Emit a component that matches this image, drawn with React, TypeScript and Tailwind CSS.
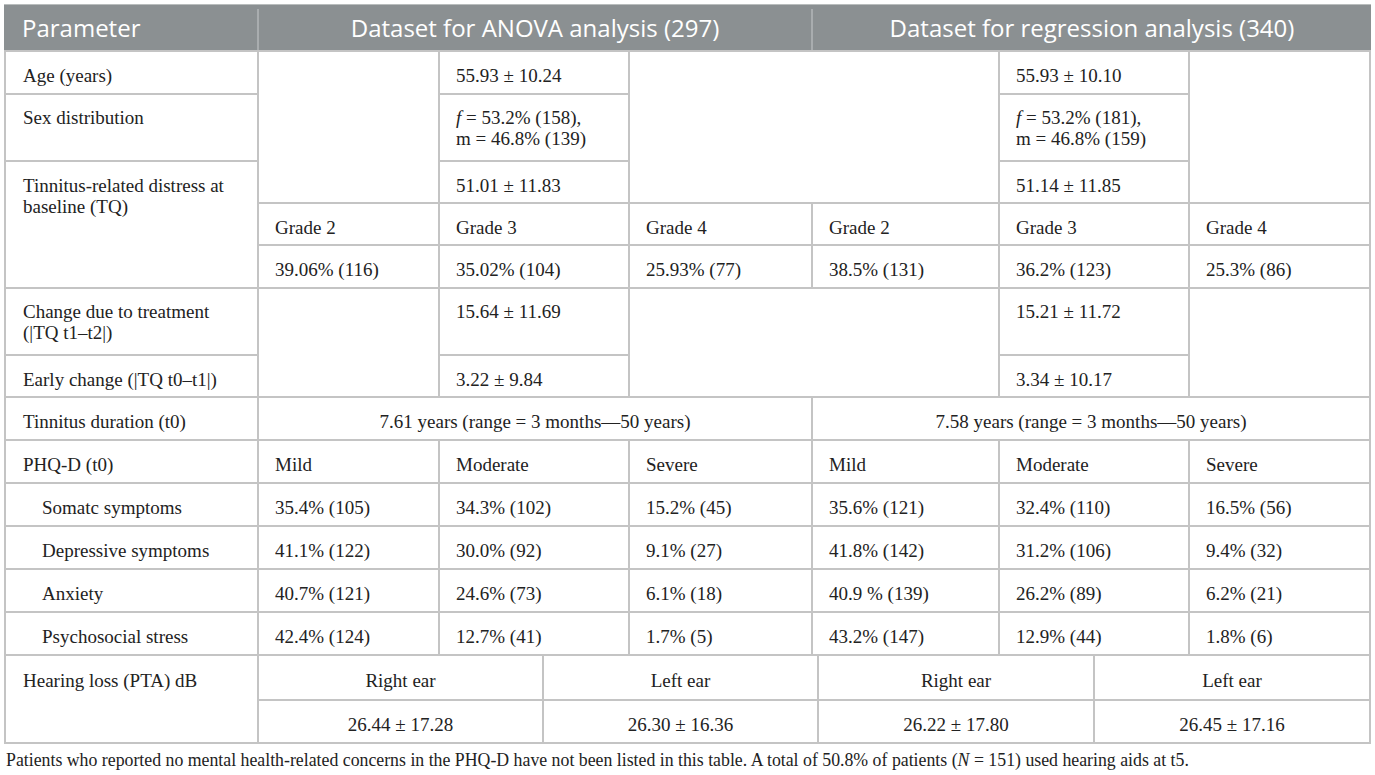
import React from "react";

const serif = { fontFamily: '"Liberation Serif", "Times New Roman", serif' };

function Cell({
  className = "",
  children,
}: {
  className?: string;
  children?: React.ReactNode;
}) {
  return (
    <div className={"bg-white text-[19px] leading-[21px] text-[#222222] " + (className.includes("pt-") ? "" : "pt-[13px] ") + className}>
      {children}
    </div>
  );
}

const grades = ["Grade 2", "Grade 3", "Grade 4", "Grade 2", "Grade 3", "Grade 4"];
const gradeVals = ["39.06% (116)", "35.02% (104)", "25.93% (77)", "38.5% (131)", "36.2% (123)", "25.3% (86)"];
const sev = ["Mild", "Moderate", "Severe", "Mild", "Moderate", "Severe"];
const phq: [string, string[]][] = [
  ["Somatc symptoms", ["35.4% (105)", "34.3% (102)", "15.2% (45)", "35.6% (121)", "32.4% (110)", "16.5% (56)"]],
  ["Depressive symptoms", ["41.1% (122)", "30.0% (92)", "9.1% (27)", "41.8% (142)", "31.2% (106)", "9.4% (32)"]],
  ["Anxiety", ["40.7% (121)", "24.6% (73)", "6.1% (18)", "40.9 % (139)", "26.2% (89)", "6.2% (21)"]],
  ["Psychosocial stress", ["42.4% (124)", "12.7% (41)", "1.7% (5)", "43.2% (147)", "12.9% (44)", "1.8% (6)"]],
];

export default function App() {
  return (
    <div className="w-[1375px] h-[775px] bg-white pl-[4px] pt-[4px]" style={serif}>
      <div className="w-[1367px]">
        {/* Header */}
        <div
          className="flex h-[46px] bg-[#8b9092] text-white text-[24px] border-t border-[#b9bdbd]"
          style={{ fontFamily: '"Open Sans", "Noto Sans", sans-serif' }}
        >
          <div className="w-[253px] pl-[18px] flex items-center">Parameter</div>
          <div className="w-[2px] bg-[#a9adaf] mt-[4px]" />
          <div className="w-[552px] flex items-center justify-center">Dataset for ANOVA analysis (297)</div>
          <div className="w-[2px] bg-[#a9adaf] mt-[4px]" />
          <div className="w-[558px] flex items-center justify-center">Dataset for regression analysis (340)</div>
        </div>

        {/* Main body */}
        <div className="grid grid-cols-[251px_179px_188px_181px_185px_188px_179px] grid-rows-[41px_65px_40px_40px_41px_65px_40px_41px_41px_41px_41px_41px_41px] gap-[2px] bg-[#c4c4c4] px-[2px] pt-[2px]">
          {/* Row 1 */}
          <Cell className="col-start-1 row-start-1 pl-[17px]">Age (years)</Cell>
          <Cell className="col-start-2 row-start-1 row-span-3" />
          <Cell className="col-start-3 row-start-1 pl-[16px]">55.93 ± 10.24</Cell>
          <Cell className="col-start-4 col-span-2 row-start-1 row-span-3" />
          <Cell className="col-start-6 row-start-1 pl-[16px]">55.93 ± 10.10</Cell>
          <Cell className="col-start-7 row-start-1 row-span-3" />
          {/* Row 2 */}
          <Cell className="col-start-1 row-start-2 pl-[17px] pt-[12px]">Sex distribution</Cell>
          <Cell className="col-start-3 row-start-2 pl-[16px] pt-[12px]">
            <i>f</i> = 53.2% (158),
            <br />m = 46.8% (139)
          </Cell>
          <Cell className="col-start-6 row-start-2 pl-[16px] pt-[12px]">
            <i>f</i> = 53.2% (181),
            <br />m = 46.8% (159)
          </Cell>
          {/* Row 3 */}
          <Cell className="col-start-1 row-start-3 row-span-3 pl-[17px]">
            Tinnitus-related distress at
            <br />
            baseline (TQ)
          </Cell>
          <Cell className="col-start-3 row-start-3 pl-[16px]">51.01 ± 11.83</Cell>
          <Cell className="col-start-6 row-start-3 pl-[16px]">51.14 ± 11.85</Cell>
          {/* Row 4, 5 */}
          {grades.map((g, i) => (
            <Cell key={"g" + i} className="row-start-4 pl-[16px]">
              {g}
            </Cell>
          ))}
          {gradeVals.map((g, i) => (
            <Cell key={"gv" + i} className="row-start-5 pl-[16px]">
              {g}
            </Cell>
          ))}
          {/* Row 6, 7 */}
          <Cell className="col-start-1 row-start-6 pl-[17px] pt-[12px]">
            Change due to treatment
            <br />
            (|TQ t1–t2|)
          </Cell>
          <Cell className="col-start-2 row-start-6 row-span-2" />
          <Cell className="col-start-3 row-start-6 pl-[16px] pt-[12px]">15.64 ± 11.69</Cell>
          <Cell className="col-start-4 col-span-2 row-start-6 row-span-2" />
          <Cell className="col-start-6 row-start-6 pl-[16px] pt-[12px]">15.21 ± 11.72</Cell>
          <Cell className="col-start-7 row-start-6 row-span-2" />
          <Cell className="col-start-1 row-start-7 pl-[17px]">Early change (|TQ t0–t1|)</Cell>
          <Cell className="col-start-3 row-start-7 pl-[16px]">3.22 ± 9.84</Cell>
          <Cell className="col-start-6 row-start-7 pl-[16px]">3.34 ± 10.17</Cell>
          {/* Row 8 */}
          <Cell className="col-start-1 row-start-8 pl-[17px]">Tinnitus duration (t0)</Cell>
          <Cell className="col-start-2 col-span-3 row-start-8 text-center">
            7.61 years (range = 3 months—50 years)
          </Cell>
          <Cell className="col-start-5 col-span-3 row-start-8 text-center">
            7.58 years (range = 3 months—50 years)
          </Cell>
          {/* Row 9 */}
          <Cell className="col-start-1 row-start-9 pl-[17px]">PHQ-D (t0)</Cell>
          {sev.map((s, i) => (
            <Cell key={"s" + i} className="row-start-9 pl-[16px]">
              {s}
            </Cell>
          ))}
          {/* Rows 10-13 */}
          {phq.map(([label, vals]) => (
            <React.Fragment key={label}>
              <Cell className="col-start-1 pl-[36px]">{label}</Cell>
              {vals.map((v, i) => (
                <Cell key={i} className="pl-[16px]">
                  {v}
                </Cell>
              ))}
            </React.Fragment>
          ))}
        </div>

        {/* Hearing loss */}
        <div className="grid grid-cols-[251px_283px_273px_274px_274px] grid-rows-[43px_41px] gap-[2px] bg-[#c4c4c4] p-[2px]">
          <Cell className="row-span-2 pl-[17px] pt-[14px]">Hearing loss (PTA) dB</Cell>
          <Cell className="text-center pt-[14px]">Right ear</Cell>
          <Cell className="text-center pt-[14px]">Left ear</Cell>
          <Cell className="text-center pt-[14px]">Right ear</Cell>
          <Cell className="text-center pt-[14px]">Left ear</Cell>
          <Cell className="text-center">26.44 ± 17.28</Cell>
          <Cell className="text-center">26.30 ± 16.36</Cell>
          <Cell className="text-center">26.22 ± 17.80</Cell>
          <Cell className="text-center">26.45 ± 17.16</Cell>
        </div>

        <div className="pt-[6px] pl-[2px] text-[17.8px] leading-[21px] text-[#222222]">
          Patients who reported no mental health-related concerns in the PHQ-D have not been listed in this
          table. A total of 50.8% of patients (<i>N</i> = 151) used hearing aids at t5.
        </div>
      </div>
    </div>
  );
}
